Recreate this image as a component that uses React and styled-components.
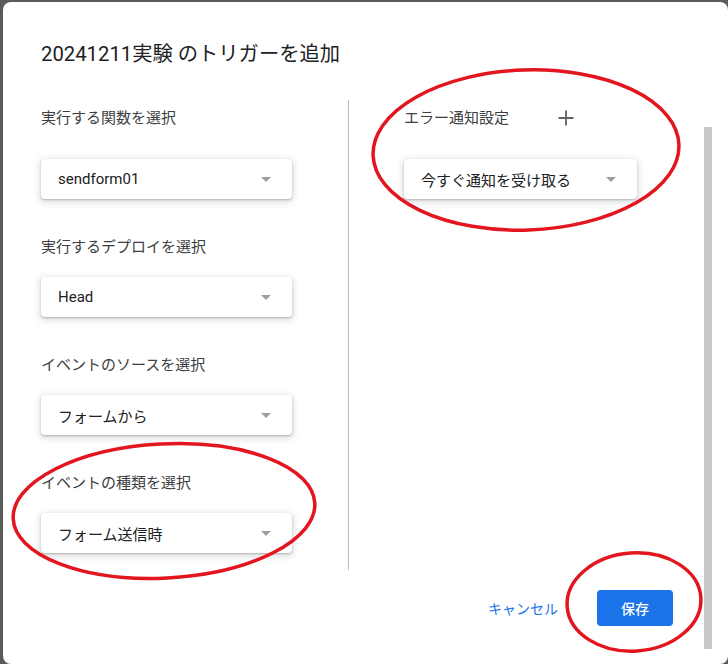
import React from "react";
import styled, { createGlobalStyle } from "styled-components";

const Global = createGlobalStyle`
  html, body {
    margin: 0;
    padding: 0;
    background: #5b5b5b;
    overflow: hidden;
  }
  body {
    font-family: Roboto, "Noto Sans CJK JP", "Liberation Sans", sans-serif;
    -webkit-font-smoothing: antialiased;
  }
  * { box-sizing: border-box; }
`;

const Page = styled.div`
  position: relative;
  width: 728px;
  height: 664px;
  overflow: hidden;
`;

const Dialog = styled.div`
  margin: 2px 0 0 3px;
  width: 725px;
  height: 662px;
  background: #fff;
  border-radius: 8px;
  padding: 38px 16px 0 38px;
  display: flex;
  flex-direction: column;
`;

const Title = styled.h1`
  margin: 0;
  font-size: 20.3px;
  line-height: 28px;
  font-weight: 400;
  color: #202124;
`;

const Body = styled.div`
  display: flex;
  margin-top: 32px;
  flex: 1;
`;

const Main = styled.div`
  flex: 1;
  display: flex;
  flex-direction: column;
`;

const Columns = styled.div`
  display: flex;
  height: 470px;
`;

const LeftColumn = styled.div`
  width: 307px;
  padding-top: 8px;
  display: flex;
  flex-direction: column;
`;

const Divider = styled.div`
  width: 1px;
  background: #bdbdbd;
`;

const RightColumn = styled.div`
  flex: 1;
  padding: 8px 0 0 55px;
  display: flex;
  flex-direction: column;
`;

const Group = styled.div`
  display: flex;
  flex-direction: column;
  margin-bottom: 38px;
`;

const LabelRow = styled.div`
  display: flex;
  align-items: center;
  height: 20px;
  margin-bottom: ${(p) => (p.$first ? 31 : 20)}px;
`;

const Label = styled.span`
  font-size: 15px;
  line-height: 20px;
  color: #3c4043;
  white-space: nowrap;
`;

const AddButton = styled.button`
  width: 24px;
  height: 24px;
  margin-left: 45px;
  padding: 0;
  border: 0;
  background: transparent;
  display: flex;
  align-items: center;
  justify-content: center;
  flex: none;
`;

const Select = styled.div`
  width: ${(p) => p.$width}px;
  height: 40px;
  border-radius: 4px;
  background: #fff;
  box-shadow: 0 1px 2px rgba(60, 64, 67, 0.3), 0 2px 6px 2px rgba(60, 64, 67, 0.15);
  display: flex;
  align-items: center;
  justify-content: space-between;
  padding: 0 21px 0 17px;
  font-size: 15px;
  color: #202124;
  white-space: nowrap;
`;

const Arrow = styled.span`
  width: 0;
  height: 0;
  border-left: 5.5px solid transparent;
  border-right: 5.5px solid transparent;
  border-top: 5.5px solid #9e9e9e;
  margin-top: 1px;
  flex: none;
`;

const Footer = styled.div`
  display: flex;
  justify-content: flex-end;
  align-items: center;
  padding: 20px 31px 0 0;
`;

const TextButton = styled.button`
  height: 36px;
  padding: 0 16px;
  margin-right: 23px;
  border: 0;
  background: transparent;
  color: #1a73e8;
  font-family: inherit;
  font-size: 14px;
`;

const PrimaryButton = styled.button`
  width: 76px;
  height: 36px;
  border: 0;
  border-radius: 4px;
  background: #1a73e8;
  color: #fff;
  font-family: inherit;
  font-size: 14px;
  font-weight: 500;
`;

const Scrollbar = styled.div`
  width: 8px;
  height: 522px;
  margin-top: 27px;
  background: #c8c8c8;
  flex: none;
`;

const Annotations = styled.svg`
  position: absolute;
  left: 0;
  top: 0;
  pointer-events: none;
`;

function Field({ label, value, width = 251, first }) {
  return (
    <Group>
      <LabelRow $first={first}>
        <Label>{label}</Label>
      </LabelRow>
      <Select $width={width}>
        <span>{value}</span>
        <Arrow />
      </Select>
    </Group>
  );
}

export default function App() {
  return (
    <Page>
      <Global />
      <Dialog>
        <Title>20241211実験 のトリガーを追加</Title>
        <Body>
          <Main>
            <Columns>
              <LeftColumn>
                <Field first label="実行する関数を選択" value="sendform01" />
                <Field label="実行するデプロイを選択" value="Head" />
                <Field label="イベントのソースを選択" value="フォームから" />
                <Field label="イベントの種類を選択" value="フォーム送信時" />
              </LeftColumn>
              <Divider />
              <RightColumn>
                <Group>
                  <LabelRow $first>
                    <Label>エラー通知設定</Label>
                    <AddButton aria-label="追加">
                      <svg width="24" height="24" viewBox="0 0 24 24">
                        <path d="M19.5 12.9h-6.6v6.6h-1.8v-6.6H4.5v-1.8h6.6V4.5h1.8v6.6h6.6v1.8z" fill="#5f6368" />
                      </svg>
                    </AddButton>
                  </LabelRow>
                  <Select $width={233}>
                    <span>今すぐ通知を受け取る</span>
                    <Arrow />
                  </Select>
                </Group>
              </RightColumn>
            </Columns>
            <Footer>
              <TextButton>キャンセル</TextButton>
              <PrimaryButton>保存</PrimaryButton>
            </Footer>
          </Main>
          <Scrollbar />
        </Body>
      </Dialog>
      <Annotations width="728" height="664" viewBox="0 0 728 664">
        <g fill="none" stroke="#e3161f" strokeWidth="3.5">
          <ellipse cx="526" cy="150" rx="153" ry="80" transform="rotate(-2 526 150)" />
          <ellipse cx="164" cy="511" rx="151" ry="67" transform="rotate(-3 164 511)" />
          <ellipse cx="634" cy="602" rx="67" ry="49" transform="rotate(-4 634 602)" />
        </g>
      </Annotations>
    </Page>
  );
}
